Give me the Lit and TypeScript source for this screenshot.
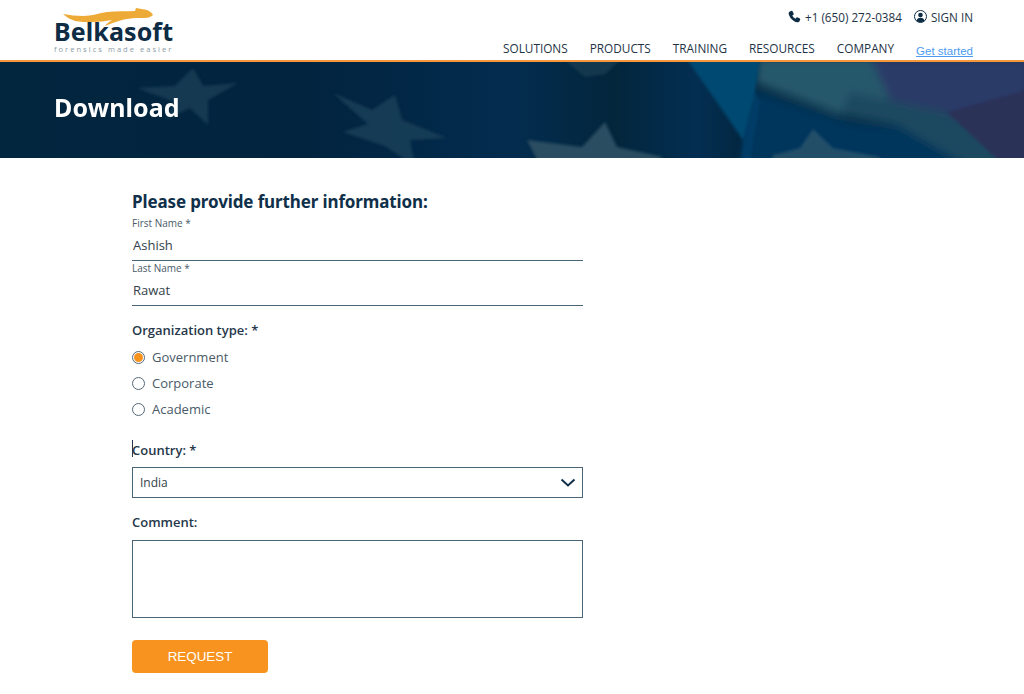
import { LitElement, html, css, svg } from "lit";
import { customElement } from "lit/decorators.js";

const poly = (points: string, fill: string, op = 1) =>
  svg`<polygon points=${points} fill=${fill} opacity=${op}></polygon>`;

@customElement("app-root")
export class AppRoot extends LitElement {
  static styles = css`
    :host { display: block; width: 1024px; height: 694px; overflow: hidden; background: #fff; font-family: "Open Sans", sans-serif; color: #1e3346; }
    * { box-sizing: border-box; }
    .header { height: 62px; border-bottom: 2px solid #f5973a; display: flex; justify-content: space-between; padding: 0 51px 0 54px; }
    .logo { width: 122px; display: flex; flex-direction: column; position: relative; padding-top: 18px; }
    .swoosh { position: absolute; left: 0; top: 0; }
    .logo-name { font: 700 25px/26px "Noto Sans", sans-serif; color: #0e2c44; letter-spacing: 0.1px; position: relative; }
    .logo-tag { font: 400 7.5px/10px "Open Sans", sans-serif; letter-spacing: 2.04px; color: #8a9aa6; white-space: nowrap; }
    .right { display: flex; flex-direction: column; align-items: flex-end; }
    .top { display: flex; align-items: center; height: 17px; margin-top: 8px; font-size: 11.7px; color: #1e3346; }
    .top svg { display: block; }
    .phone { margin-right: 4px; }
    .user { margin-left: 12px; margin-right: 4px; }
    .nav { display: flex; align-items: flex-start; margin-top: 15px; }
    .nav span { font-size: 11.8px; line-height: 17px; color: #1e3346; margin-right: 22px; }
    .nav a { font: 400 11.5px/17px "Liberation Sans", sans-serif; color: #4c9bf0; text-decoration: underline; margin-top: 3px; }
    .hero { height: 96px; position: relative; overflow: hidden; background: #03263f; padding: 29px 0 0 54px; }
    .hero svg { position: absolute; inset: 0; }
    .hero h1 { position: relative; margin: 0; font: 700 25px/32px "Noto Sans", sans-serif; color: #fff; letter-spacing: 0.1px; }
    .form { width: 451px; margin-left: 132px; display: flex; flex-direction: column; padding-top: 32px; }
    h2 { margin: 0; font: 700 17px/24px "Noto Sans", sans-serif; color: #10304a; letter-spacing: -0.12px; white-space: nowrap; }
    .small { font-size: 10px; line-height: 14px; color: #4a5a68; margin-top: 2px; }
    .field { height: 31px; border-bottom: 1px solid #4a6478; font-size: 13px; line-height: 30px; padding-left: 1px; color: #333f4a; }
    .small.last { margin-top: 0; }
    .label { font-size: 13px; line-height: 18px; font-weight: 600; color: #26384a; }
    .org { margin-top: 15px; }
    .radios { display: flex; flex-direction: column; gap: 8px; margin-top: 9px; }
    .radio { display: flex; align-items: center; height: 18px; font-size: 13px; color: #4a5a68; gap: 7px; }
    .dot { width: 13px; height: 13px; border-radius: 50%; border: 1px solid #55687a; display: flex; align-items: center; justify-content: center; }
    .dot i { width: 9px; height: 9px; border-radius: 50%; background: #f7931e; display: block; }
    .country { margin-top: 23px; position: relative; }
    .caret { position: absolute; left: 0; top: -1px; width: 1px; height: 17px; background: #26384a; }
    .select { margin-top: 8px; height: 31px; border: 1px solid #4a6478; display: flex; align-items: center; justify-content: space-between; padding: 0 6px 0 7px; font-size: 12px; color: #333f4a; }
    .comment { margin-top: 15px; }
    .area { margin-top: 9px; height: 78px; border: 1px solid #4a6478; }
    button { margin-top: 22px; width: 136px; height: 33px; border: 0; border-radius: 4px; background: #f7931e; color: #fff; font: 400 13.4px/33px "Liberation Sans", sans-serif; padding: 0; }
  `;

  render() {
    return html`
      <div class="header">
        <div class="logo">
          <svg class="swoosh" width="122" height="30" viewBox="54 0 122 30">
            <path d="M63 14 C70 15 76 16 83 16 C92 16 99 13 107 12 C116 11 126 11.5 135 11 L136 8 C139 9 144 9 147 10 C150 11 152 13 153 15 C151 17 148 18 145 18 L137 18 C131 18 126 19 122 20 C115 22 110 24 105 26 C106 24 109 22 112 20 C105 21 99 22 93 22 C86 22 80 22 75 21 C70 19 66 17 63 14 Z" fill="#eeaa36"></path>
          </svg>
          <div class="logo-name">Belkasoft</div>
          <div class="logo-tag">forensics made easier</div>
        </div>
        <div class="right">
          <div class="top">
            <svg class="phone" width="13" height="13" viewBox="0 0 24 24"><path d="M6.6 1.5 L2.6 3 C1.2 3.8 1 5.4 1.4 7.2 C3 14.5 9.5 21 16.8 22.6 C18.6 23 20.2 22.8 21 21.4 L22.5 17.4 C22.7 16.8 22.5 16.2 22 15.9 L17.3 13.4 C16.8 13.1 16.2 13.3 15.8 13.7 L13.9 16 C11.3 14.8 9.2 12.7 8 10.1 L10.3 8.2 C10.7 7.8 10.9 7.2 10.6 6.7 L8.1 2 C7.8 1.5 7.2 1.3 6.6 1.5 Z" fill="#0e2c44"></path></svg>
            <span>+1 (650) 272-0384</span>
            <svg class="user" width="13" height="13" viewBox="0 0 26 26"><circle cx="13" cy="13" r="12" fill="#fff" stroke="#0e2c44" stroke-width="2"></circle><circle cx="13" cy="10" r="4.6" fill="#0e2c44"></circle><path d="M5 22 C5.5 17 9 15.5 13 15.5 C17 15.5 20.5 17 21 22 C18 25 8 25 5 22 Z" fill="#0e2c44"></path></svg>
            <span>SIGN IN</span>
          </div>
          <div class="nav">
            <span>SOLUTIONS</span><span>PRODUCTS</span><span>TRAINING</span><span>RESOURCES</span><span>COMPANY</span>
            <a href="#">Get started</a>
          </div>
        </div>
      </div>
      <div class="hero">
        <svg width="1024" height="96" viewBox="0 0 1024 96">
          <defs>
            <linearGradient id="g" x1="0" x2="1" y1="0" y2="0">
              <stop offset="0" stop-color="#03263f"></stop>
              <stop offset="0.3" stop-color="#02243f"></stop>
              <stop offset="0.5" stop-color="#032c4f"></stop>
              <stop offset="0.6" stop-color="#03263c"></stop>
              <stop offset="0.68" stop-color="#032e52"></stop>
              <stop offset="0.73" stop-color="#02263e"></stop>
              <stop offset="1" stop-color="#02263e"></stop>
            </linearGradient>
            <filter id="b" x="-10%" y="-10%" width="120%" height="120%"><feGaussianBlur stdDeviation="1.6"></feGaussianBlur></filter>
            <filter id="b2" x="-10%" y="-10%" width="120%" height="120%"><feGaussianBlur stdDeviation="5"></feGaussianBlur></filter>
          </defs>
          <rect width="1024" height="96" fill="url(#g)"></rect>
          <g filter="url(#b)">
            ${poly("137,26 175,24 193,6 203,24 238,21 208,38 208,63 190,46 165,58 175,40", "#1a3f55", 0.8)}
            ${poly("333,31 372,48 395,33 402,58 447,76 410,78 415,104 385,84 343,70 368,62", "#1a4058", 0.85)}
            ${poly("527,78 582,85 605,60 617,85 663,95 650,104 540,104", "#2a4e62")}
            ${poly("565,-2 620,-2 605,12 585,15", "#1d4055", 0.7)}
          </g>
          <g filter="url(#b2)">
            ${poly("755,28 850,60 900,65 990,110 740,110", "#03355c")}
            ${poly("860,-5 1030,-5 1030,100 975,100 900,50", "#2a3a68")}
            ${poly("757,-5 870,-5 890,38 840,53 755,21", "#27586c")}
            ${poly("850,30 947,51 1030,95 1030,105 970,105 897,63 840,53", "#1c4a60")}
          </g>
          <g filter="url(#b)">
            ${poly("947,50 1030,27 1030,100 1000,100", "#2a3058")}
            ${poly("687,-3 760,-3 755,30 743,78", "#064a72")}
            ${poly("743,78 755,30 760,40 750,100 741,100", "#03406a", 0.8)}
            ${poly("773,93 800,86 813,67 833,86 880,95 880,104 770,104", "#2c566e", 0.75)}
          </g>
        </svg>
        <h1>Download</h1>
      </div>
      <div class="form">
        <h2>Please provide further information:</h2>
        <div class="small">First Name *</div>
        <div class="field">Ashish</div>
        <div class="small last">Last Name *</div>
        <div class="field">Rawat</div>
        <div class="label org">Organization type: *</div>
        <div class="radios">
          <div class="radio"><span class="dot"><i></i></span>Government</div>
          <div class="radio"><span class="dot"></span>Corporate</div>
          <div class="radio"><span class="dot"></span>Academic</div>
        </div>
        <div class="label country"><span class="caret"></span>Country: *</div>
        <div class="select">India
          <svg width="16" height="9" viewBox="0 0 16 9"><path d="M1.5 1.5 L8 7.5 L14.5 1.5" fill="none" stroke="#10304a" stroke-width="2"></path></svg>
        </div>
        <div class="label comment">Comment:</div>
        <div class="area"></div>
        <button>REQUEST</button>
      </div>
    `;
  }
}
